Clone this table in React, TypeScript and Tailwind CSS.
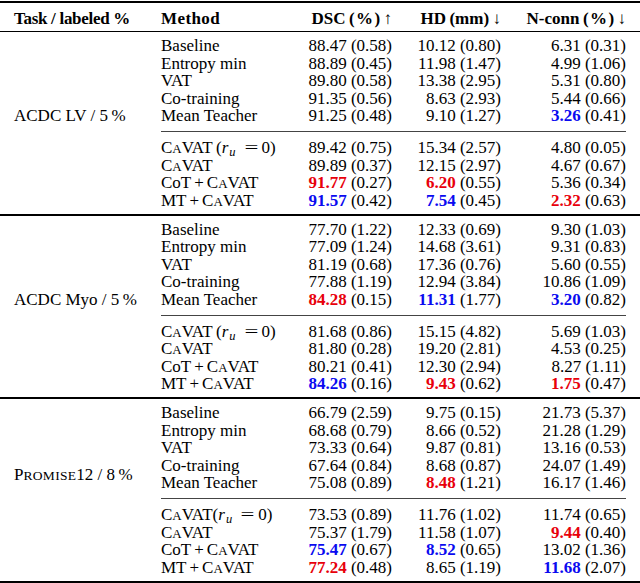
import React from 'react'

type Hl = 'r' | 'b' | undefined
type Cell = [string, string, Hl?]
type Row = [React.ReactNode, Cell, Cell, Cell]

const CaVAT = () => (
  <>
    C<span className="text-[13px]">A</span>VAT
  </>
)

const Ru = ({ gap = true }: { gap?: boolean }) => (
  <>
    <CaVAT />
    {gap ? '\u2009(' : '('}
    <span className="italic">r</span>
    <span className="italic text-[12.5px] relative top-[3px] ml-[1px]">u</span>
    <span className="inline-block w-[15px] ml-[8px] mr-[3px] text-center scale-x-[1.45]">=</span>0)
  </>
)

const Plus = ({ left }: { left: string }) => (
  <>
    {left}
    <span className="px-[3px]">+</span>
    <CaVAT />
  </>
)

const blocks: { label: React.ReactNode; labelTop: string; top: Row[]; bottom: Row[] }[] = [
  {
    label: 'ACDC LV / 5\u2009%',
    labelTop: 'pt-[75px]',
    top: [
      ['Baseline', ['88.47', '0.58'], ['10.12', '0.80'], ['6.31', '0.31']],
      ['Entropy min', ['88.89', '0.45'], ['11.98', '1.47'], ['4.99', '1.06']],
      ['VAT', ['89.80', '0.58'], ['13.38', '2.95'], ['5.31', '0.80']],
      ['Co-training', ['91.35', '0.56'], ['8.63', '2.93'], ['5.44', '0.66']],
      ['Mean Teacher', ['91.25', '0.48'], ['9.10', '1.27'], ['3.26', '0.41', 'b']],
    ],
    bottom: [
      [<Ru />, ['89.42', '0.75'], ['15.34', '2.57'], ['4.80', '0.05']],
      [<CaVAT />, ['89.89', '0.37'], ['12.15', '2.97'], ['4.67', '0.67']],
      [<Plus left="CoT" />, ['91.77', '0.27', 'r'], ['6.20', '0.55', 'r'], ['5.36', '0.34']],
      [<Plus left="MT" />, ['91.57', '0.42', 'b'], ['7.54', '0.45', 'b'], ['2.32', '0.63', 'r']],
    ],
  },
  {
    label: 'ACDC Myo / 5\u2009%',
    labelTop: 'pt-[75px]',
    top: [
      ['Baseline', ['77.70', '1.22'], ['12.33', '0.69'], ['9.30', '1.03']],
      ['Entropy min', ['77.09', '1.24'], ['14.68', '3.61'], ['9.31', '0.83']],
      ['VAT', ['81.19', '0.68'], ['17.36', '0.76'], ['5.60', '0.55']],
      ['Co-training', ['77.88', '1.19'], ['12.94', '3.84'], ['10.86', '1.09']],
      ['Mean Teacher', ['84.28', '0.15', 'r'], ['11.31', '1.77', 'b'], ['3.20', '0.82', 'b']],
    ],
    bottom: [
      [<Ru />, ['81.68', '0.86'], ['15.15', '4.82'], ['5.69', '1.03']],
      [<CaVAT />, ['81.80', '0.28'], ['19.20', '2.81'], ['4.53', '0.25']],
      [<Plus left="CoT" />, ['80.21', '0.41'], ['12.30', '2.94'], ['8.27', '1.11']],
      [<Plus left="MT" />, ['84.26', '0.16', 'b'], ['9.43', '0.62', 'r'], ['1.75', '0.47', 'r']],
    ],
  },
  {
    label: (
      <>
        P<span className="text-[13.5px] tracking-[0.3px]">ROMISE</span>12 / 8{'\u2009'}%
      </>
    ),
    labelTop: 'pt-[67px]',
    top: [
      ['Baseline', ['66.79', '2.59'], ['9.75', '0.15'], ['21.73', '5.37']],
      ['Entropy min', ['68.68', '0.79'], ['8.66', '0.52'], ['21.28', '1.29']],
      ['VAT', ['73.33', '0.64'], ['9.87', '0.81'], ['13.16', '0.53']],
      ['Co-training', ['67.64', '0.84'], ['8.68', '0.87'], ['24.07', '1.49']],
      ['Mean Teacher', ['75.08', '0.89'], ['8.48', '1.21', 'r'], ['16.17', '1.46']],
    ],
    bottom: [
      [<Ru gap={false} />, ['73.53', '0.89'], ['11.76', '1.02'], ['11.74', '0.65']],
      [<CaVAT />, ['75.37', '1.79'], ['11.58', '1.07'], ['9.44', '0.40', 'r']],
      [<Plus left="CoT" />, ['75.47', '0.67', 'b'], ['8.52', '0.65', 'b'], ['13.02', '1.36']],
      [<Plus left="MT" />, ['77.24', '0.48', 'r'], ['8.65', '1.19'], ['11.68', '2.07', 'b']],
    ],
  },
]

function Value({ cell }: { cell: Cell }) {
  const [v, sd, hl] = cell
  const cls = hl === 'r' ? 'font-bold text-[#e8000b]' : hl === 'b' ? 'font-bold text-[#0a0af0]' : ''
  return (
    <span className="text-right whitespace-nowrap">
      <span className={cls}>{v}</span> ({sd})
    </span>
  )
}

function Rows({ rows }: { rows: Row[] }) {
  return (
    <div>
      {rows.map((r, i) => (
        <div key={i} className="grid grid-cols-[130px_101px_109px_125px] h-[17.5px] leading-[17.5px]">
          <span className="whitespace-nowrap">{r[0]}</span>
          <Value cell={r[1]} />
          <Value cell={r[2]} />
          <Value cell={r[3]} />
        </div>
      ))}
    </div>
  )
}

export default function App() {
  return (
    <div className="w-[640px] h-[583px] bg-white text-black text-[17px] pt-px font-['Liberation_Serif',serif]">
      <div className="h-[2px] bg-black" />
      <div className="flex pt-[7px] pb-[3.5px] leading-[17.5px] font-bold">
        <div className="w-[161px] pl-[14px] whitespace-nowrap tracking-[-0.3px]">Task / labeled %</div>
        <div className="grid grid-cols-[130px_101px_109px_125px]">
          <span className="tracking-[0.4px]">Method</span>
          <span className="text-right whitespace-nowrap">
            DSC{'\u2009'}({'\u200a'}%{'\u200a'}){'\u2009'}<span className="font-normal">↑</span>
          </span>
          <span className="text-right whitespace-nowrap">
            HD{'\u2009'}(mm){'\u2009'}<span className="font-normal">↓</span>
          </span>
          <span className="text-right whitespace-nowrap">
            N-conn{'\u2009'}({'\u200a'}%{'\u200a'}){'\u2009'}<span className="font-normal">↓</span>
          </span>
        </div>
      </div>
      <div className="h-px bg-black" />
      {blocks.map((b, i) => (
        <div key={i}>
          <div className="flex">
            <div className={`w-[161px] pl-[14px] leading-[17.5px] whitespace-nowrap ${b.labelTop}`}>{b.label}</div>
            <div className="w-[465px]">
              <div className="pt-[5px] pb-[6.5px]">
                <Rows rows={b.top} />
              </div>
              <div className="h-px bg-[#444]" />
              <div className="pt-[7px] pb-[4.5px]">
                <Rows rows={b.bottom} />
              </div>
            </div>
          </div>
          <div className="h-[2px] bg-black" />
        </div>
      ))}
    </div>
  )
}
